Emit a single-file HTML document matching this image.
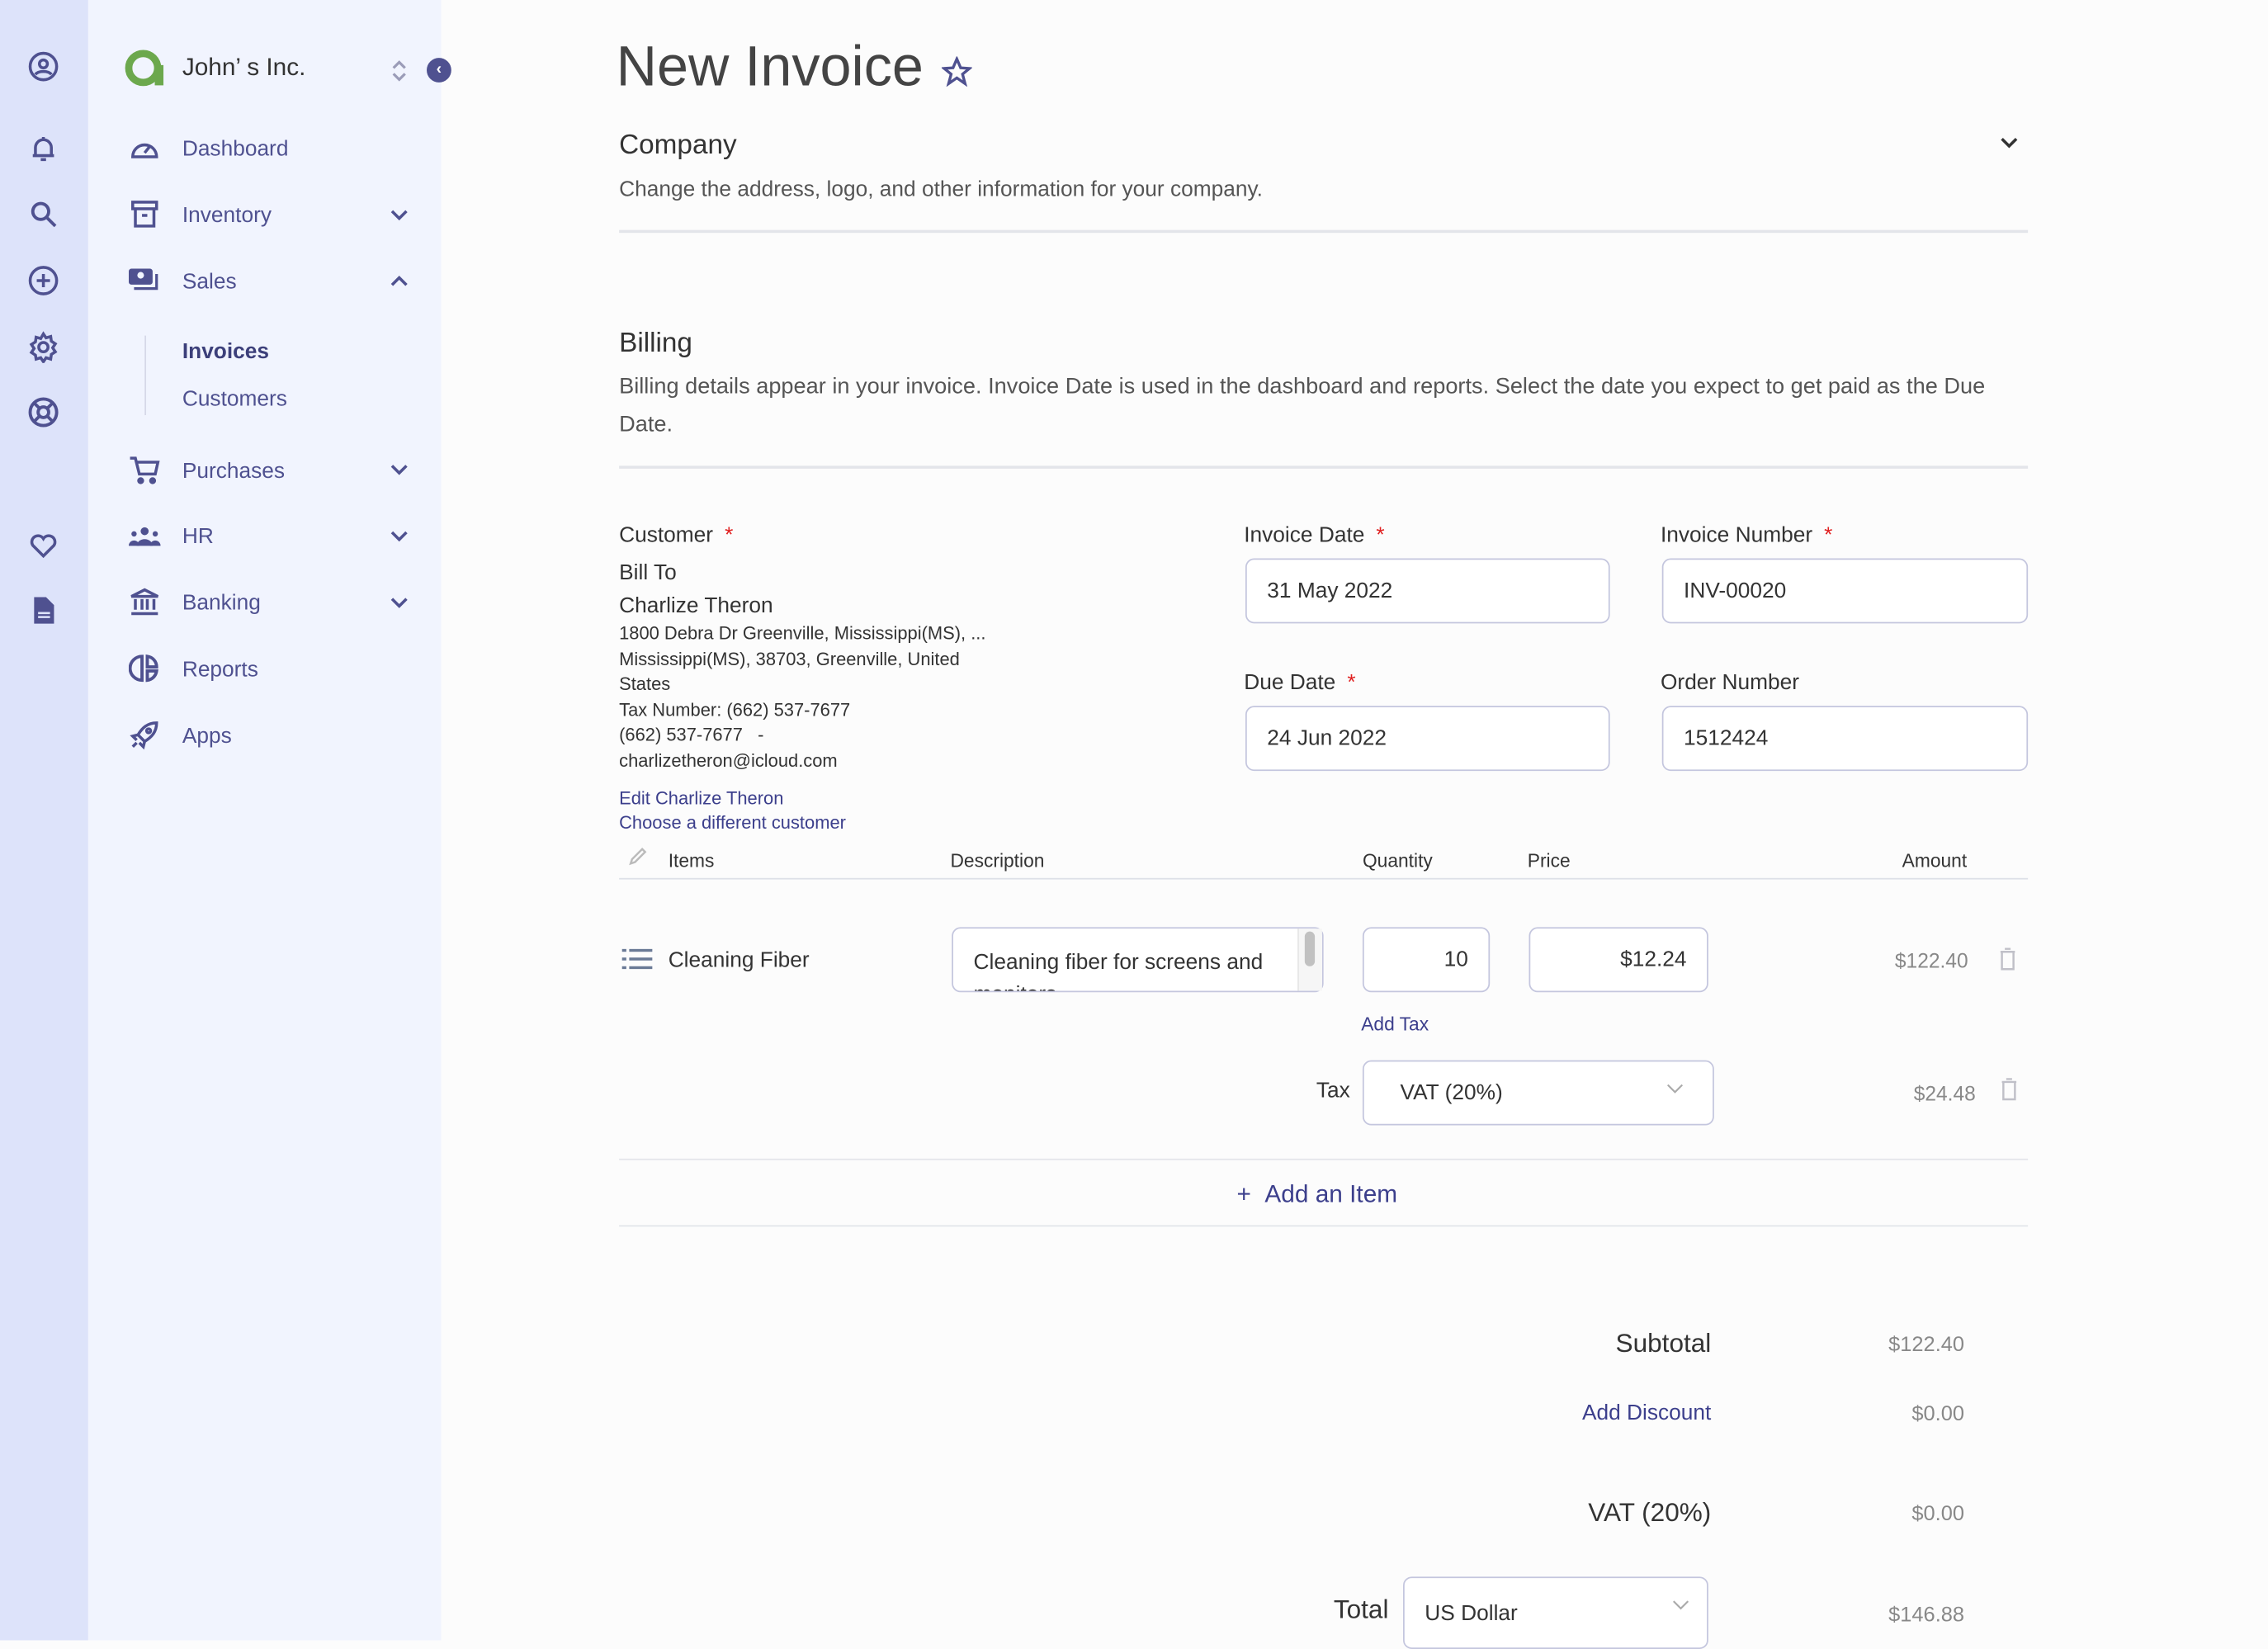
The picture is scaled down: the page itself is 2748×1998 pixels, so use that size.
<!DOCTYPE html>
<html><head><meta charset="utf-8"><style>
*{box-sizing:border-box;margin:0;padding:0}
html,body{width:2748px;height:1986px;overflow:hidden;background:#fcfcfc;font-family:"Liberation Sans",sans-serif;color:#333}
#w{position:absolute;left:0;top:0;width:1568px;height:1134px;transform:scale(1.7526);transform-origin:0 0}
.a{position:absolute;white-space:nowrap}
.rail{position:absolute;left:0;top:0;width:61px;height:1134px;background:#dde3fa}
.side{position:absolute;left:61px;top:0;width:244px;height:1134px;background:#f1f4fe}
.ic{position:absolute;width:22px;height:22px;color:#4f5190}
.nav{position:absolute;left:126px;font-size:15px;color:#4f5190;transform:translateY(-50%);margin-top:1px}
.chev{position:absolute;left:268px;width:16px;height:16px;color:#4f5190}
.lbl{font-size:15px;color:#333;transform:translateY(-50%);margin-top:1px}
.star{color:#e02020;margin-left:8px}
.inp{position:absolute;background:#fff;border:1px solid #c4c6de;border-radius:6px;font-size:15px;color:#333;display:flex;align-items:center;padding:0 14px}
.line{position:absolute;left:428px;width:974px;height:2px;background:#e3e5ea}
.g{color:#888}
.lk{color:#3c3f8c}
</style></head><body><div id="w">
<div class="rail"></div>
<div class="side"></div>
<svg class="ic" style="left:19px;top:35px" viewBox="0 0 24 24" fill="none" stroke="currentColor" stroke-width="2.2"><circle cx="12" cy="12" r="10"/><circle cx="12" cy="10" r="3"/><path d="M6 18c2-3 10-3 12 0"/></svg>
<svg class="ic" style="left:19px;top:92px" viewBox="0 0 24 24" fill="none" stroke="currentColor" stroke-width="2.2"><path d="M6 17V11a6 6 0 0112 0v6M4 17h16M10 20h4M12 3v2"/></svg>
<svg class="ic" style="left:19px;top:137px" viewBox="0 0 24 24" fill="none" stroke="currentColor" stroke-width="2.4"><circle cx="10" cy="10" r="6"/><path d="M15 15l6 6"/></svg>
<svg class="ic" style="left:19px;top:183px" viewBox="0 0 24 24" fill="none" stroke="currentColor" stroke-width="2.2"><circle cx="12" cy="12" r="10"/><path d="M12 7v10M7 12h10"/></svg>
<svg class="ic" style="left:19px;top:229px" viewBox="0 0 24 24" fill="none" stroke="currentColor" stroke-width="2.2"><circle cx="12" cy="12" r="3.5"/><path d="M12 2l2 3 3.5-1 .5 3.5 3 2-2 3 2 3-3 2-.5 3.5-3.5-1-2 3-2-3-3.5 1L6 18l-3-2 2-3-2-3 3-2 .5-3.5 3.5 1z"/></svg>
<svg class="ic" style="left:19px;top:274px" viewBox="0 0 24 24" fill="none" stroke="currentColor" stroke-width="2.4"><circle cx="12" cy="12" r="10"/><circle cx="12" cy="12" r="4"/><path d="M5 5l4 4M19 5l-4 4M5 19l4-4M19 19l-4-4"/></svg>
<svg class="ic" style="left:19px;top:366px" viewBox="0 0 24 24" fill="none" stroke="currentColor" stroke-width="2.2"><path d="M12 20l-8-8a4.5 4.5 0 018-5 4.5 4.5 0 018 5z"/></svg>
<svg class="ic" style="left:19px;top:411px" viewBox="0 0 24 24" fill="currentColor"><path d="M5 2h9l6 6v14H5z"/><path d="M8 14h9M8 17h9" stroke="#dde3fa" stroke-width="1.6"/></svg>
<svg class="a" style="left:86px;top:33px" width="28" height="28" viewBox="0 0 28 28"><circle cx="13" cy="14" r="10" fill="none" stroke="#6ca84d" stroke-width="5"/><rect x="21" y="12" width="6" height="14" fill="#6ca84d"/></svg>
<div class="a" style="left:126px;top:37px;font-size:17px;color:#333">John’ s Inc.</div>
<svg class="a" style="left:270px;top:40px" width="12" height="18" viewBox="0 0 12 18" fill="none" stroke="#9b9cb8" stroke-width="1.8"><path d="M2 7l4-4 4 4M2 11l4 4 4-4"/></svg>
<div class="a" style="left:295px;top:40px;width:17px;height:17px;border-radius:50%;background:#4f5190;color:#fff;font-size:11px;text-align:center;line-height:17px;font-weight:bold">‹</div>
<svg class="ic" style="left:89px;top:91px" viewBox="0 0 24 24" fill="none" stroke="currentColor" stroke-width="2.2"><path d="M3 19a9 9 0 1118 0z"/><path d="M12 16l4-5"/></svg>
<div class="nav" style="top:102px">Dashboard</div>
<svg class="ic" style="left:89px;top:137px" viewBox="0 0 24 24" fill="none" stroke="currentColor" stroke-width="2.2"><rect x="3" y="3" width="18" height="5"/><path d="M5 8v13h14V8M10 13h4"/></svg>
<div class="nav" style="top:148px">Inventory</div>
<svg class="ic" style="left:89px;top:183px" viewBox="0 0 24 24"><rect x="0" y="3" width="18" height="12" rx="2" fill="#4f5190"/><circle cx="9" cy="8" r="2.5" fill="#f1f4fe"/><path d="M21 7v11H4" fill="none" stroke="#4f5190" stroke-width="2"/></svg>
<div class="nav" style="top:194px">Sales</div>
<div class="a" style="left:100px;top:232px;width:1px;height:55px;background:#d6d8e8"></div>
<div class="nav" style="top:242px;color:#3c3f7a;font-weight:bold">Invoices</div>
<div class="nav" style="top:275px">Customers</div>
<svg class="ic" style="left:89px;top:314px" viewBox="0 0 24 24" fill="none" stroke="currentColor" stroke-width="2.2"><path d="M1 3h4l3 12h12l2-9H6"/><circle cx="9" cy="20" r="1.5" fill="currentColor"/><circle cx="18" cy="20" r="1.5" fill="currentColor"/></svg>
<div class="nav" style="top:325px">Purchases</div>
<svg class="ic" style="left:88px;top:359px;width:24px" viewBox="0 0 24 24" fill="currentColor"><circle cx="12" cy="9" r="3"/><path d="M6 20a6 5 0 0112 0z"/><circle cx="4" cy="11" r="2"/><circle cx="20" cy="11" r="2"/><path d="M0 20a4 4 0 018 0zM16 20a4 4 0 018 0z"/></svg>
<div class="nav" style="top:370px">HR</div>
<svg class="ic" style="left:89px;top:405px" viewBox="0 0 24 24" fill="none" stroke="currentColor" stroke-width="2.2"><path d="M2 8l10-5 10 5zM5 10v8M10 10v8M14 10v8M19 10v8M2 21h20"/></svg>
<div class="nav" style="top:416px">Banking</div>
<svg class="ic" style="left:89px;top:451px" viewBox="0 0 24 24" fill="none" stroke="currentColor" stroke-width="2.4"><path d="M10 3a9 9 0 000 18zM14 3a8 8 0 017 8h-7zM14 14h7a8 8 0 01-7 7z"/></svg>
<div class="nav" style="top:462px">Reports</div>
<svg class="ic" style="left:89px;top:497px" viewBox="0 0 24 24" fill="none" stroke="currentColor" stroke-width="2.2"><path d="M21 3c-7 0-11 4-14 9l5 5c5-3 9-7 9-14zM7 12l-4 1 3 3M12 17l-1 4-3-3M6 18l-3 3"/><circle cx="15" cy="9" r="1.5"/></svg>
<div class="nav" style="top:508px">Apps</div>
<svg class="chev" style="top:141px" viewBox="0 0 16 16" fill="none" stroke="currentColor" stroke-width="2"><path d="M3 5l5 5 5-5"/></svg>
<svg class="chev" style="top:186px" viewBox="0 0 16 16" fill="none" stroke="currentColor" stroke-width="2"><path d="M3 11l5-5 5 5"/></svg>
<svg class="chev" style="top:317px" viewBox="0 0 16 16" fill="none" stroke="currentColor" stroke-width="2"><path d="M3 5l5 5 5-5"/></svg>
<svg class="chev" style="top:363px" viewBox="0 0 16 16" fill="none" stroke="currentColor" stroke-width="2"><path d="M3 5l5 5 5-5"/></svg>
<svg class="chev" style="top:409px" viewBox="0 0 16 16" fill="none" stroke="currentColor" stroke-width="2"><path d="M3 5l5 5 5-5"/></svg>

<div class="a" style="left:426px;top:25px;font-size:39px;color:#444">New Invoice</div>
<svg class="a" style="left:651px;top:39px" width="21" height="21" viewBox="0 0 24 24" fill="none" stroke="#4f5190" stroke-width="2.2"><path d="M12 2l3 7 7 .5-5.5 4.5 2 7.5L12 17l-6.5 4.5 2-7.5L2 9.5 9 9z"/></svg>
<div class="a lbl" style="left:428px;top:100px;font-size:19px">Company</div>
<svg class="a" style="left:1381px;top:91px" width="16" height="16" viewBox="0 0 16 16" fill="none" stroke="#333" stroke-width="2"><path d="M3 5l5 5 5-5"/></svg>
<div class="a lbl" style="left:428px;top:130px;font-size:15px;color:#555">Change the address, logo, and other information for your company.</div>
<div class="line" style="top:159px"></div>
<div class="a lbl" style="left:428px;top:237px;font-size:19px">Billing</div>
<div class="a lbl" style="left:428px;top:267px;font-size:15.5px;color:#555">Billing details appear in your invoice. Invoice Date is used in the dashboard and reports. Select the date you expect to get paid as the Due</div>
<div class="a lbl" style="left:428px;top:293px;font-size:15.5px;color:#555">Date.</div>
<div class="line" style="top:322px"></div>

<div class="a lbl" style="left:428px;top:369px">Customer<span class="star">*</span></div>
<div class="a lbl" style="left:860px;top:369px">Invoice Date<span class="star">*</span></div>
<div class="a lbl" style="left:1148px;top:369px">Invoice Number<span class="star">*</span></div>
<div class="inp" style="left:861px;top:386px;width:252px;height:45px">31 May 2022</div>
<div class="inp" style="left:1149px;top:386px;width:253px;height:45px">INV-00020</div>
<div class="a lbl" style="left:860px;top:471px">Due Date<span class="star">*</span></div>
<div class="a lbl" style="left:1148px;top:471px">Order Number</div>
<div class="inp" style="left:861px;top:488px;width:252px;height:45px">24 Jun 2022</div>
<div class="inp" style="left:1149px;top:488px;width:253px;height:45px">1512424</div>

<div class="a lbl" style="left:428px;top:395px">Bill To</div>
<div class="a lbl" style="left:428px;top:418px">Charlize Theron</div>
<div class="a lbl" style="left:428px;top:437px;font-size:12.5px">1800 Debra Dr Greenville, Mississippi(MS), ...</div>
<div class="a lbl" style="left:428px;top:455px;font-size:12.5px">Mississippi(MS), 38703, Greenville, United</div>
<div class="a lbl" style="left:428px;top:472px;font-size:12.5px">States</div>
<div class="a lbl" style="left:428px;top:490px;font-size:12.5px">Tax Number: (662) 537-7677</div>
<div class="a lbl" style="left:428px;top:507px;font-size:12.5px">(662) 537-7677 &nbsp; -</div>
<div class="a lbl" style="left:428px;top:525px;font-size:12.5px">charlizetheron@icloud.com</div>
<div class="a lbl lk" style="left:428px;top:551px;font-size:12.5px">Edit Charlize Theron</div>
<div class="a lbl lk" style="left:428px;top:568px;font-size:12.5px">Choose a different customer</div>

<svg class="a" style="left:434px;top:585px" width="14" height="14" viewBox="0 0 14 14" fill="none" stroke="#bbb" stroke-width="1.4"><path d="M2 12l1-3 7-7 2 2-7 7z"/></svg>
<div class="a lbl" style="left:462px;top:594px;font-size:13px">Items</div>
<div class="a lbl" style="left:657px;top:594px;font-size:13px">Description</div>
<div class="a lbl" style="left:942px;top:594px;font-size:13px">Quantity</div>
<div class="a lbl" style="left:1056px;top:594px;font-size:13px">Price</div>
<div class="a lbl" style="left:1315px;top:594px;font-size:13px">Amount</div>
<div class="line" style="top:607px;height:1px;background:#dde0e8"></div>

<svg class="a" style="left:430px;top:656px" width="21" height="14" viewBox="0 0 21 14" fill="#6a7a96"><rect x="0" y="0" width="3" height="2"/><rect x="5" y="0" width="16" height="2"/><rect x="0" y="6" width="3" height="2"/><rect x="5" y="6" width="16" height="2"/><rect x="0" y="12" width="3" height="2"/><rect x="5" y="12" width="16" height="2"/></svg>
<div class="a lbl" style="left:462px;top:663px">Cleaning Fiber</div>
<div class="inp" style="left:658px;top:641px;width:257px;height:45px;overflow:hidden;align-items:flex-start;padding-top:13px;line-height:22px;white-space:nowrap">Cleaning fiber for screens and<br>monitors</div>
<div class="a" style="left:897px;top:642px;width:17px;height:43px;background:#f6f6f6;border-left:1px solid #e6e6e6"></div>
<div class="a" style="left:902px;top:644px;width:7px;height:24px;border-radius:4px;background:#c1c1c1"></div>
<div class="inp" style="left:942px;top:641px;width:88px;height:45px;justify-content:flex-end">10</div>
<div class="inp" style="left:1057px;top:641px;width:124px;height:45px;justify-content:flex-end">$12.24</div>
<div class="a lbl g" style="left:1310px;top:663px;font-size:14px">$122.40</div>
<svg class="a" style="left:1382px;top:655px" width="12" height="16" viewBox="0 0 12 16" fill="none" stroke="#c0c0c8" stroke-width="1.4"><path d="M1 3h10M4 1h4M2 3v12h8V3"/></svg>
<div class="a lbl lk" style="left:941px;top:707px;font-size:13px">Add Tax</div>
<div class="a lbl" style="left:910px;top:753px">Tax</div>
<div class="inp" style="left:942px;top:733px;width:243px;height:45px;padding-left:25px">VAT (20%)</div>
<svg class="a" style="left:1151px;top:748px" width="14" height="10" viewBox="0 0 14 10" fill="none" stroke="#aaa" stroke-width="1.2"><path d="M2 2l5 5 5-5"/></svg>
<div class="a lbl g" style="left:1323px;top:755px;font-size:14px">$24.48</div>
<svg class="a" style="left:1383px;top:745px" width="12" height="16" viewBox="0 0 12 16" fill="none" stroke="#c0c0c8" stroke-width="1.4"><path d="M1 3h10M4 1h4M2 3v12h8V3"/></svg>
<div class="line" style="top:801px;height:1px"></div>
<div class="a lbl lk" style="left:855px;top:825px;font-size:17px">+ &nbsp;Add an Item</div>
<div class="line" style="top:847px;height:1px"></div>

<div class="a lbl" style="right:385px;top:928px;font-size:18px">Subtotal</div>
<div class="a lbl g" style="right:210px;top:929px;font-size:14.5px">$122.40</div>
<div class="a lbl lk" style="right:385px;top:976px;font-size:15px">Add Discount</div>
<div class="a lbl g" style="right:210px;top:977px;font-size:14.5px">$0.00</div>
<div class="a lbl" style="right:385px;top:1045px;font-size:18px">VAT (20%)</div>
<div class="a lbl g" style="right:210px;top:1046px;font-size:14.5px">$0.00</div>
<div class="a lbl" style="right:608px;top:1112px;font-size:18px">Total</div>
<div class="inp" style="left:970px;top:1090px;width:211px;height:50px">US Dollar</div>
<svg class="a" style="left:1155px;top:1105px" width="14" height="10" viewBox="0 0 14 10" fill="none" stroke="#aaa" stroke-width="1.2"><path d="M2 2l5 5 5-5"/></svg>
<div class="a lbl g" style="right:210px;top:1116px;font-size:14.5px">$146.88</div>
</div></body></html>
